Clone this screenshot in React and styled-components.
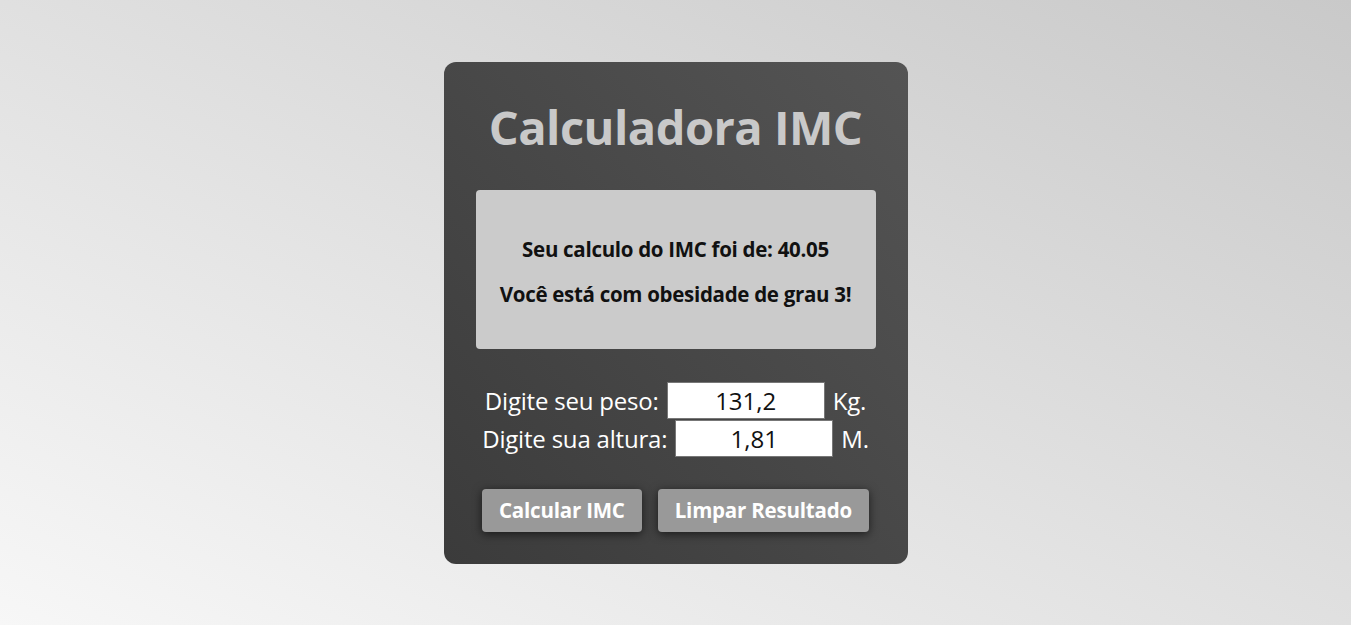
import React, { useState } from 'react'
import styled, { createGlobalStyle } from 'styled-components'

const GlobalStyle = createGlobalStyle`
    body {
        margin: 0;
        font-family: "Open Sans", "Noto Sans", sans-serif;
    }
`

const Page = styled.div`
    min-height: 100vh;
    display: flex;
    align-items: center;
    justify-content: center;
    background: linear-gradient(to top right, #f7f7f7 0%, #e0e0e0 50%, #c9c9c9 100%);
`

const Card = styled.div`
    width: 464px;
    box-sizing: border-box;
    padding: 32px;
    border-radius: 12px;
    background: linear-gradient(to bottom left, #545454 0%, #3b3b3b 100%);
    display: flex;
    flex-direction: column;
    align-items: center;
`

const Title = styled.h1`
    margin: 0 0 32px;
    padding-top: 1px;
    height: 63px;
    line-height: 64px;
    font-size: 47px;
    font-weight: 700;
    color: #c9c9c9;
    letter-spacing: -0.5px;
`

const Result = styled.div`
    width: 400px;
    height: 159px;
    box-sizing: border-box;
    border-radius: 4px;
    background: #cbcbcb;
    display: flex;
    flex-direction: column;
    justify-content: center;
    align-items: center;
    gap: 17px;
    padding-top: 4px;
    p {
        margin: 0;
        font-size: 20.5px;
        line-height: 28px;
        font-weight: 700;
        color: #111;
        letter-spacing: -0.3px;
    }
`

const Form = styled.div`
    margin-top: 33px;
    display: flex;
    flex-direction: column;
    align-items: center;
    gap: 1px;
`

const Row = styled.label`
    display: flex;
    align-items: center;
    gap: 8px;
    font-size: 24px;
    color: #fff;
    letter-spacing: -0.2px;
`

const Field = styled.input`
    width: 158px;
    height: 37px;
    box-sizing: border-box;
    border: 1px solid #777;
    background: #fff;
    text-align: center;
    font-family: inherit;
    font-size: 24px;
    color: #111;
    padding: 0;
    outline: none;
`

const Buttons = styled.div`
    margin-top: 32px;
    display: flex;
    gap: 16px;
`

const Button = styled.button`
    height: 43px;
    padding: 0 17px;
    border: none;
    border-radius: 4px;
    background: #999;
    color: #fff;
    font-family: inherit;
    font-size: 20.5px;
    font-weight: 700;
    letter-spacing: -0.2px;
    box-shadow: 0 2px 10px rgba(0, 0, 0, 0.6);
    cursor: pointer;
`

function App() {
    const [peso, setPeso] = useState('131,2')
    const [altura, setAltura] = useState('1,81')

    return (
        <Page>
            <GlobalStyle />
            <Card>
                <Title>Calculadora IMC</Title>
                <Result>
                    <p>Seu calculo do IMC foi de: 40.05</p>
                    <p>Você está com obesidade de grau 3!</p>
                </Result>
                <Form>
                    <Row>
                        Digite seu peso:
                        <Field value={peso} onChange={e => setPeso(e.target.value)} />
                        Kg.
                    </Row>
                    <Row>
                        Digite sua altura:
                        <Field value={altura} onChange={e => setAltura(e.target.value)} />
                        M.
                    </Row>
                </Form>
                <Buttons>
                    <Button>Calcular IMC</Button>
                    <Button>Limpar Resultado</Button>
                </Buttons>
            </Card>
        </Page>
    )
}

export default App
